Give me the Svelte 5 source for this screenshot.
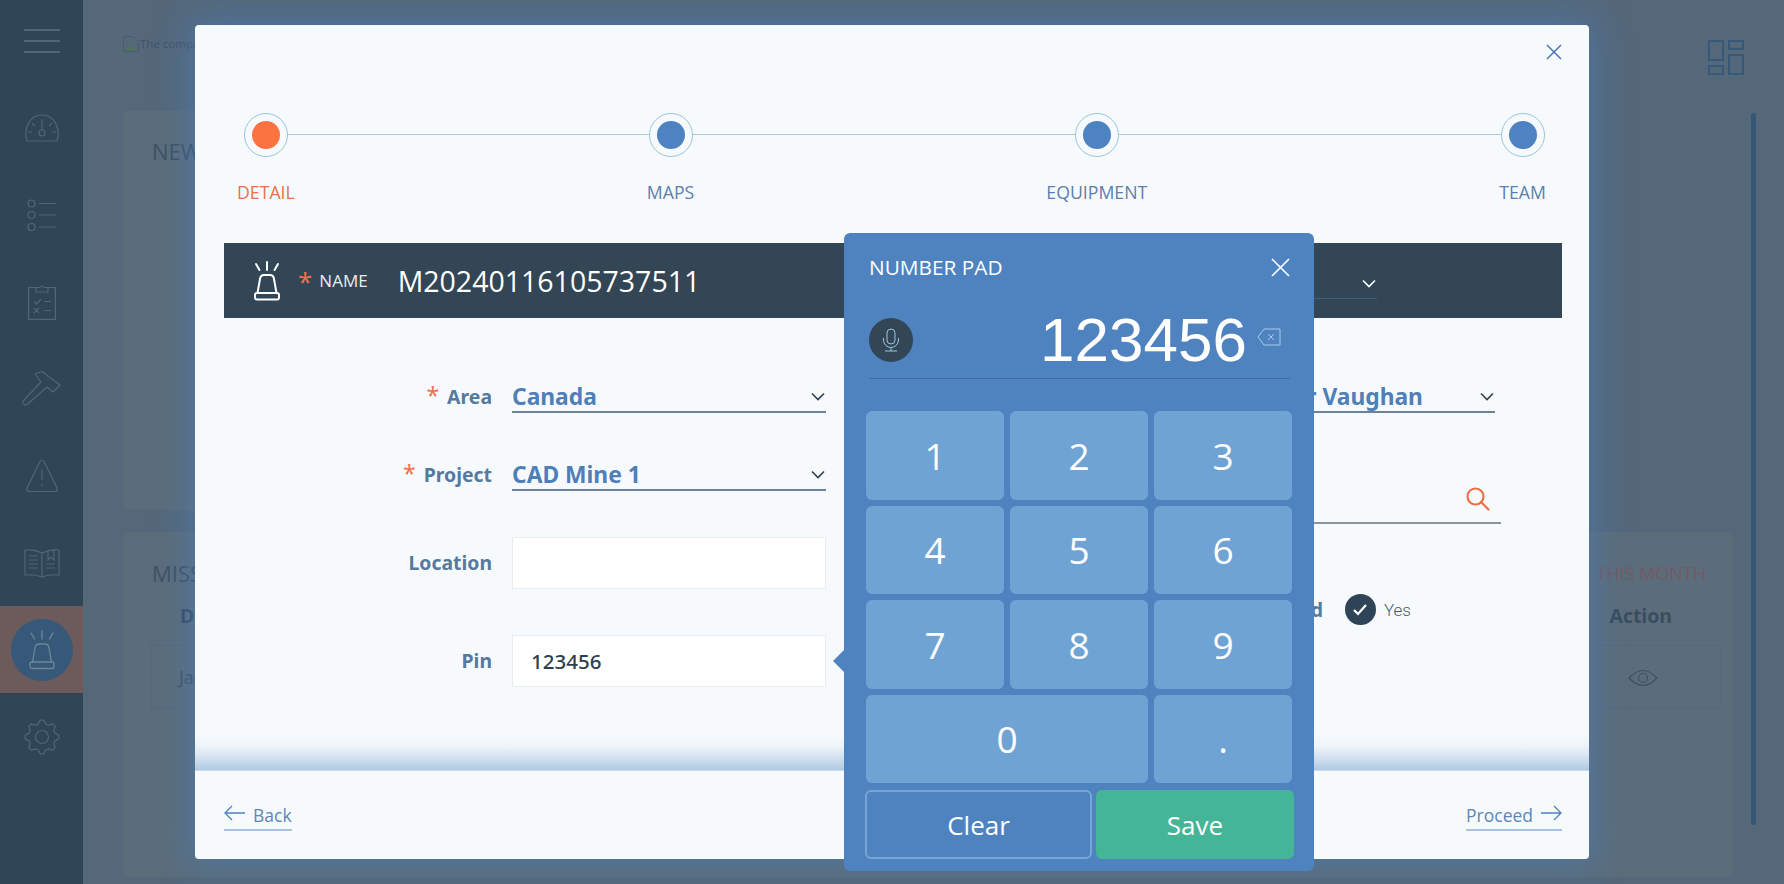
<script lang="ts">
  const steps = [
    { label: 'DETAIL', active: true },
    { label: 'MAPS', active: false },
    { label: 'EQUIPMENT', active: false },
    { label: 'TEAM', active: false }
  ];
  const keys = ['1', '2', '3', '4', '5', '6', '7', '8', '9', '0', '.'];

  let pin = $state('123456');

  // lobed outline for the settings icon
  function gearPath(cx: number, cy: number, r1: number, r2: number, teeth: number) {
    let d = '';
    const n = teeth * 4;
    for (let i = 0; i < n; i++) {
      const a = (i / n) * Math.PI * 2 - Math.PI / 2 - (Math.PI * 2) / n / 2;
      const r = i % 4 < 2 ? r2 : r1;
      const x = (cx + Math.cos(a) * r).toFixed(1);
      const y = (cy + Math.sin(a) * r).toFixed(1);
      d += (i === 0 ? 'M' : 'L') + x + ' ' + y;
    }
    return d + 'Z';
  }
</script>

{#snippet siren()}
  <svg class="siren" viewBox="0 0 28 40" fill="none" stroke="currentColor" stroke-linecap="round">
    <path d="M14 1v8M3 3l3.500 6M25 3l-3.500 6" />
    <path d="M4.500 32L7 18q.5-4 4-4h6q3.500 0 4 4l2.500 14" />
    <rect x="2" y="32" width="24" height="6.500" rx="2" />
  </svg>
{/snippet}

{#snippet chevron()}
  <svg class="chevron" viewBox="0 0 14 9" fill="none" stroke="currentColor" stroke-width="1.600">
    <path d="M1 1.500l6 6 6-6" />
  </svg>
{/snippet}

<div class="page">
  <nav class="sidebar">
    <div class="nav-head">
      <svg width="36" height="24" viewBox="0 0 36 24" stroke="currentColor" stroke-width="2"><path d="M0 1h36M0 12h36M0 23h36" /></svg>
    </div>
    <div class="nav-item">
      <svg width="36" height="28" viewBox="0 0 36 28" fill="none" stroke="currentColor" stroke-width="1.200">
        <path d="M3 27C-1 14 6 1 18 1s19 13 15 26z" />
        <circle cx="18" cy="19" r="3" />
        <path d="M18 5v11M8 9l3 3M28 9l-3 3M4 18h4M32 18h-4" />
      </svg>
    </div>
    <div class="nav-item">
      <svg width="30" height="32" viewBox="0 0 30 32" fill="none" stroke="currentColor" stroke-width="1.200">
        <circle cx="4.500" cy="4.500" r="3.500" /><circle cx="4.500" cy="16" r="3.500" /><circle cx="4.500" cy="28" r="3.500" />
        <path d="M12 4.500h17M12 16h17M12 28h17" />
      </svg>
    </div>
    <div class="nav-item">
      <svg width="28" height="36" viewBox="0 0 28 36" fill="none" stroke="currentColor" stroke-width="1.200">
        <path d="M8 3.500H.6v31.800h26.800V3.500H20" />
        <path d="M8 8V3.500h4q2-3 4 0h4V8z" />
        <path d="M6 17l2.500 3 4.500-5M16 17.500h7M6 24l5 5M11 24l-5 5M16 26.500h7" />
      </svg>
    </div>
    <div class="nav-item">
      <svg width="39" height="35" viewBox="0 0 39 35" fill="none" stroke="currentColor" stroke-width="1.200" stroke-linejoin="round">
        <path d="M13 3l7-2.500L38 14l-7 7-6-5L5 33.500q-2 1-3.500-.5T1 30l18-19z" />
      </svg>
    </div>
    <div class="nav-item">
      <svg width="32" height="34" viewBox="0 0 32 34" fill="none" stroke="currentColor" stroke-width="1.200">
        <path d="M14 2.500q2-3 4 0L31 29q1 3.500-2 3.500H3Q0 32.500 1 29z" />
        <path d="M16 11v10M16 25v2" />
      </svg>
    </div>
    <div class="nav-item">
      <svg width="36" height="32" viewBox="0 0 36 32" fill="none" stroke="currentColor" stroke-width="1.200">
        <path d="M18 6Q10 2 1 3v25q9-1 17 2 8-3 17-2V3q-9-1-17 3zM18 6v24" />
        <path d="M5 9h9M5 13h9M5 17h9M5 21h9M22 17h9M22 21h9" />
        <path d="M24 4v9l3-3 3 3V2" />
      </svg>
    </div>
    <div class="nav-item active">
      <div class="active-dot">{@render siren()}</div>
    </div>
    <div class="nav-item">
      <svg width="36" height="36" viewBox="0 0 36 36" fill="none" stroke="currentColor" stroke-width="1.200" stroke-linejoin="round">
        <path d={gearPath(18, 18, 13.500, 17, 8)} />
        <circle cx="18" cy="18" r="6.500" />
      </svg>
    </div>
  </nav>

  <main class="main">
    <div class="topbar">
      <div class="logo">
        <svg width="16" height="16" viewBox="0 0 16 16" fill="none">
          <path d="M.5.500h10l5 5v10H.5z" stroke="#4a5c6c" />
          <path d="M1.500 14.500l4-5 3 3 2-1 4 3z" fill="#4d7258" />
        </svg>
        <span>The company logo</span>
      </div>
      <svg class="layout-icon" width="36" height="36" viewBox="0 0 36 36" fill="none" stroke="currentColor" stroke-width="2">
        <rect x="1" y="1" width="14" height="19" /><rect x="21" y="1" width="14" height="8" />
        <rect x="1" y="26" width="14" height="8" /><rect x="21" y="15" width="14" height="19" />
      </svg>
    </div>

    <section class="card first">
      <h2>NEW MISSION</h2>
    </section>

    <section class="card second">
      <div class="card-head">
        <h2>MISSIONS</h2>
        <span class="month">THIS MONTH</span>
      </div>
      <div class="table-head"><span>Date</span><span>Action</span></div>
      <div class="table-row">
        <span>Jan 16</span>
        <svg width="30" height="20" viewBox="0 0 30 20" fill="none" stroke="#3b5166" stroke-width="1.200">
          <path d="M1 10q14-15 28 0-14 15-28 0z" /><circle cx="15" cy="10" r="4.500" />
        </svg>
      </div>
    </section>
  </main>
  <div class="scrollbar"></div>

  <div class="modal">
    <button class="modal-close" aria-label="Close">
      <svg width="16" height="16" viewBox="0 0 16 16" stroke="currentColor" stroke-width="1.500"><path d="M1 1l14 14M15 1L1 15" /></svg>
    </button>

    <div class="body">
      <div class="stepper">
        <div class="stepper-line"></div>
        {#each steps as step}
          <div class="step" class:current={step.active}>
            <div class="ring"><div class="dot"></div></div>
            <span>{step.label}</span>
          </div>
        {/each}
      </div>

      <div class="name-bar">
        <div class="name-icon">{@render siren()}</div>
        <span class="star">*</span>
        <span class="name-label">NAME</span>
        <span class="name-value">M20240116105737511</span>
        <div class="bar-select">{@render chevron()}</div>
      </div>

      <div class="form">
        <div class="col">
          <div class="row">
            <span class="label"><i>*</i>Area</span>
            <div class="select"><span>Canada</span>{@render chevron()}</div>
          </div>
          <div class="row">
            <span class="label"><i>*</i>Project</span>
            <div class="select"><span>CAD Mine 1</span>{@render chevron()}</div>
          </div>
          <div class="row">
            <span class="label">Location</span>
            <div class="input"></div>
          </div>
          <div class="row">
            <span class="label">Pin</span>
            <div class="input">{pin}</div>
          </div>
        </div>

        <div class="col-right">
          <div class="select owner"><span>Peter Vaughan</span>{@render chevron()}</div>
          <div class="search">
            <svg width="24" height="24" viewBox="0 0 24 24" fill="none" stroke="#ee6f43" stroke-width="2.200">
              <circle cx="9.500" cy="9.500" r="8" /><path d="M15 15l7.500 7.500" stroke-linecap="round" />
            </svg>
          </div>
          <div class="check-row">
            <span class="label">Required</span>
            <div class="check">
              <svg width="16" height="13" viewBox="0 0 16 13" fill="none" stroke="#fff" stroke-width="2.200"><path d="M2 7l4 4 8-9" /></svg>
            </div>
            <span class="yes">Yes</span>
          </div>
        </div>
      </div>
    </div>

    <div class="footer">
      <div class="link">
        <svg width="21" height="16" viewBox="0 0 21 16" fill="none" stroke="currentColor" stroke-width="1.300"><path d="M8 1L1 8l7 7M1 8h20" /></svg>
        <span>Back</span>
      </div>
      <div class="link">
        <span>Proceed</span>
        <svg width="21" height="16" viewBox="0 0 21 16" fill="none" stroke="currentColor" stroke-width="1.300"><path d="M13 1l7 7-7 7M20 8H0" /></svg>
      </div>
    </div>

    <div class="pad">
      <div class="pad-head">
        <span>NUMBER PAD</span>
        <svg width="19" height="19" viewBox="0 0 19 19" stroke="#fff" stroke-width="1.700"><path d="M1 1l17 17M18 1L1 18" /></svg>
      </div>
      <div class="pad-display">
        <div class="mic">
          <svg width="18" height="24" viewBox="0 0 18 24" fill="none" stroke="#9cc3de" stroke-width="1">
            <rect x="5" y="1" width="8" height="15" rx="4" />
            <path d="M1.500 10v2a7.500 7.500 0 0 0 15 0v-2M9 19.500V23M3 23h12" />
          </svg>
        </div>
        <span class="pad-value">{pin}</span>
        <svg class="backspace" width="24" height="18" viewBox="0 0 24 18" fill="none" stroke="#a9cbe9" stroke-width="1">
          <path d="M7 1h16v16H7L1 9z" /><path d="M11 6l6 6M17 6l-6 6" />
        </svg>
      </div>
      <div class="keys">
        {#each keys as key}
          <button class="key" class:wide={key === '0'}>{key}</button>
        {/each}
      </div>
      <div class="actions">
        <button class="clear">Clear</button>
        <button class="save">Save</button>
      </div>
    </div>
  </div>
</div>

<style>
  :global(body) {
    margin: 0;
    overflow: hidden;
  }

  .page {
    position: relative;
    display: flex;
    height: 884px;
    background: #55687a;
    font-family: 'Open Sans', 'Noto Sans', sans-serif;
    overflow: hidden;
  }

  .sidebar {
    width: 83px;
    flex: none;
    background: #304555;
    color: #4f6779;
  }

  .nav-head {
    height: 84px;
    padding-bottom: 2px;
    box-sizing: border-box;
    display: flex;
    align-items: center;
    justify-content: center;
  }

  .nav-item {
    height: 87px;
    display: flex;
    align-items: center;
    justify-content: center;
  }

  .nav-item.active {
    background: #6d5a5a;
  }

  .active-dot {
    width: 62px;
    height: 62px;
    border-radius: 50%;
    background: #36597a;
    color: #6f8797;
    display: flex;
    align-items: center;
    justify-content: center;
    stroke-width: 1.300;
  }

  .siren {
    width: 28px;
    height: 40px;
    display: block;
  }

  .main {
    flex: 1;
    min-width: 0;
    padding: 0 18px 0 40px;
  }

  .topbar {
    height: 111px;
    display: flex;
    justify-content: space-between;
    align-items: flex-start;
    padding-top: 35px;
    box-sizing: border-box;
    margin-right: -11px;
  }

  .logo {
    display: flex;
    align-items: center;
    gap: 1px;
    font-size: 11.500px;
    line-height: 17px;
    color: #3f5366;
  }

  .layout-icon {
    margin-top: 5px;
    color: #385879;
  }

  .card {
    background: #5b6d7b;
    border-radius: 6px;
    box-sizing: border-box;
    padding: 0 12px 0 29px;
  }

  .card h2 {
    margin: 0;
    font-size: 22px;
    font-weight: 400;
    color: #3e5264;
    line-height: 30px;
  }

  .card.first {
    width: 1200px;
    height: 399px;
    padding-top: 25px;
  }

  .card.second {
    height: 345px;
    margin-top: 22px;
    padding-top: 26px;
  }

  .card-head {
    display: flex;
    justify-content: space-between;
    align-items: center;
    padding-right: 15px;
  }

  .month {
    font-size: 18px;
    color: #745a66;
  }

  .table-head {
    display: flex;
    justify-content: space-between;
    padding: 16px 49px 0 28px;
    font-size: 19.400px;
    font-weight: 700;
    line-height: 24px;
    color: #384d60;
  }

  .table-row {
    display: flex;
    justify-content: space-between;
    align-items: center;
    height: 63px;
    margin: 17px 0 0 -2px;
    padding: 0 62px 0 28px;
    border: 1px solid #56687a;
    box-sizing: border-box;
    font-size: 18px;
    color: #3e5264;
  }

  .table-row svg {
    margin-top: 3px;
  }

  .scrollbar {
    flex: none;
    width: 5px;
    height: 712px;
    margin: 113px 28px 0 0;
    border-radius: 3px;
    background: #375674;
  }

  .modal {
    position: absolute;
    left: 195px;
    top: 25px;
    width: 1394px;
    height: 834px;
    display: flex;
    flex-direction: column;
    background: #f7fafc;
    border-radius: 4px;
    box-shadow: 0 0 32px 6px rgba(72, 128, 196, 0.5);
  }

  .modal-close {
    position: absolute;
    right: 27px;
    top: 19px;
    padding: 0;
    border: 0;
    background: none;
    color: #4a78ae;
    line-height: 0;
  }

  .body {
    flex: 1;
    min-height: 0;
    padding: 88px 27px 0 29px;
  }

  .stepper {
    position: relative;
    display: flex;
    justify-content: space-between;
    padding: 0 16px 0 13px;
    height: 130px;
  }

  .stepper-line {
    position: absolute;
    left: 41px;
    right: 39px;
    top: 21px;
    height: 1px;
    background: #a6cfdc;
  }

  .step {
    position: relative;
    display: flex;
    flex-direction: column;
    align-items: center;
    gap: 23px;
    font-size: 17.700px;
    line-height: 24px;
    color: #5b7fae;
  }

  .step.current {
    color: #e9704c;
  }

  .ring {
    width: 44px;
    height: 44px;
    border: 1px solid #9cc4d8;
    border-radius: 50%;
    box-sizing: border-box;
    background: #f7fafc;
    display: flex;
    align-items: center;
    justify-content: center;
  }

  .dot {
    width: 28px;
    height: 28px;
    border-radius: 50%;
    background: #4d83c3;
  }

  .current .dot {
    background: #fb7341;
  }

  .name-bar {
    position: relative;
    display: flex;
    align-items: center;
    height: 75px;
    background: #324656;
    color: #fff;
  }

  .name-icon {
    margin: 0 0 0 29px;
    height: 40px;
    stroke-width: 2;
  }

  .star {
    margin-left: 17px;
    font-size: 26px;
    line-height: 26px;
    color: #f0714f;
    height: 26px;
  }

  .name-label {
    margin-left: 7px;
    font-size: 17px;
    color: #e6edf2;
  }

  .name-value {
    margin-left: 30px;
    font-size: 28.500px;
    line-height: 40px;
  }

  .bar-select {
    position: absolute;
    right: 185px;
    bottom: 19px;
    width: 300px;
    height: 30px;
    border-bottom: 1px solid #3e5f7e;
    display: flex;
    justify-content: flex-end;
    align-items: center;
    color: #fff;
  }

  .chevron {
    width: 14px;
    height: 9px;
    flex: none;
    margin-right: 1px;
  }

  .form {
    display: flex;
    justify-content: space-between;
    padding-top: 63px;
  }

  .col {
    display: flex;
    flex-direction: column;
    gap: 46px;
  }

  .row {
    display: grid;
    grid-template-columns: 268px 314px;
    column-gap: 20px;
    align-items: center;
  }

  .label {
    text-align: right;
    font-family: 'Noto Sans', sans-serif;
    font-size: 19.400px;
    font-weight: 700;
    line-height: 26px;
    color: #55799f;
  }

  .label i {
    font-style: normal;
    font-size: 23px;
    line-height: 17px;
    font-weight: 400;
    color: #f0714f;
    margin-right: 8px;
  }

  .select {
    height: 32px;
    box-sizing: border-box;
    display: flex;
    justify-content: space-between;
    align-items: center;
    border-bottom: 2px solid #6d8299;
    font-family: 'Noto Sans', sans-serif;
    font-size: 22.800px;
    font-weight: 700;
    color: #4f7fb9;
  }

  .select .chevron {
    color: #2f3f4d;
  }

  .input {
    height: 52px;
    box-sizing: border-box;
    border: 1px solid #e8edf0;
    background: #fff;
    padding: 0 18px;
    display: flex;
    align-items: center;
    font-family: 'Noto Sans', sans-serif;
    font-size: 20.500px;
    font-weight: 500;
    color: #2d3f4f;
  }

  .col-right {
    display: grid;
    grid-template-rows: 32px 111px 101px;
    justify-items: end;
    align-items: end;
    padding-right: 61px;
  }

  .owner {
    width: 300px;
    margin-right: 6px;
    padding-left: 60px;
  }

  .search {
    width: 300px;
    height: 52px;
    box-sizing: border-box;
    border-bottom: 2px solid #8d9499;
    display: flex;
    justify-content: flex-end;
    align-items: center;
    padding: 4px 11px 0 0;
  }

  .check-row {
    display: flex;
    align-items: center;
    height: 31px;
    margin-right: 90px;
  }

  .check {
    width: 31px;
    height: 31px;
    margin-left: 22px;
    border-radius: 50%;
    background: #2f4557;
    display: flex;
    align-items: center;
    justify-content: center;
  }

  .yes {
    margin-left: 8px;
    font-family: Roboto, sans-serif;
    font-size: 17px;
    font-weight: 300;
    color: #4d5a66;
  }

  .footer {
    position: relative;
    height: 89px;
    box-sizing: border-box;
    padding: 29px 27px 0 29px;
    display: flex;
    justify-content: space-between;
    align-items: flex-start;
    border-top: 1px solid #c9dcec;
  }

  .footer::before {
    content: '';
    position: absolute;
    left: 0;
    right: 0;
    top: -37px;
    height: 36px;
    background: linear-gradient(
      to bottom,
      rgba(168, 196, 224, 0),
      rgba(168, 196, 224, 0.12) 35%,
      rgba(168, 196, 224, 0.45) 65%,
      #b0c9e2
    );
  }

  .link {
    display: flex;
    align-items: center;
    gap: 8px;
    height: 29px;
    border-bottom: 2px solid #a9c2e0;
    font-size: 17.500px;
    color: #5f85b8;
  }

  .link svg {
    color: #4f83c0;
    margin-top: -4px;
  }

  .pad {
    position: absolute;
    left: 649px;
    top: 208px;
    width: 470px;
    height: 638px;
    box-sizing: border-box;
    padding: 20px 21px 0 22px;
    border-radius: 6px;
    background: #4f83c0;
  }

  .pad::before {
    content: '';
    position: absolute;
    left: -11px;
    top: 417px;
    border-style: solid;
    border-width: 11px 11px 11px 0;
    border-color: transparent #4f83c0 transparent transparent;
  }

  .pad-head {
    display: flex;
    justify-content: space-between;
    align-items: center;
    height: 28px;
    padding: 0 3px;
    font-size: 20.800px;
    color: #fff;
  }

  .pad-display {
    display: flex;
    align-items: flex-start;
    height: 60px;
    margin: 37px 3px 0;
    border-bottom: 1px solid #3d6a9f;
  }

  .mic {
    width: 44px;
    height: 44px;
    border-radius: 50%;
    background: #324656;
    display: flex;
    align-items: center;
    justify-content: center;
  }

  .pad-value {
    margin-left: auto;
    font-family: 'Liberation Sans', Arial, sans-serif;
    font-size: 62px;
    line-height: 44px;
    color: #fff;
  }

  .backspace {
    margin: 10px 9px 0 10px;
  }

  .keys {
    display: grid;
    grid-template-columns: repeat(3, 138px);
    grid-auto-rows: 88.500px;
    gap: 6px;
    margin-top: 32px;
  }

  .key {
    border: 0;
    border-radius: 6px;
    background: #6fa3d4;
    color: #fff;
    font-family: 'Open Sans', sans-serif;
    font-size: 37px;
    padding: 0;
  }

  .key.wide {
    grid-column: span 2;
  }

  .actions {
    display: grid;
    grid-template-columns: 227px 198px;
    gap: 4px;
    margin: 7px 0 0 -1px;
  }

  .actions button {
    height: 69px;
    border-radius: 6px;
    font-family: 'Open Sans', sans-serif;
    font-size: 26px;
    color: #fff;
    padding: 0;
  }

  .clear {
    border: 2px solid #76a5d6;
    background: #4f83c0;
  }

  .save {
    border: 0;
    background: #45b598;
  }
</style>
